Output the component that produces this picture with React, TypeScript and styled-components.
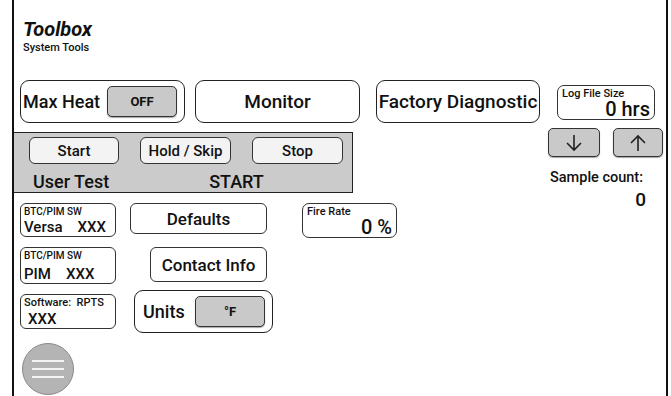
import React from 'react';
import styled, { createGlobalStyle } from 'styled-components';

const GlobalStyle = createGlobalStyle`
  html, body {
    margin: 0;
    padding: 0;
    background: #ffffff;
  }
  body {
    font-family: Roboto, 'Liberation Sans', sans-serif;
    color: #111111;
  }
`;

const App = () => {
  return (
    <>
      <GlobalStyle />
      <Frame>
        <Header>
          <Title>Toolbox</Title>
          <SubTitle>System Tools</SubTitle>
        </Header>

        <Body>
          <LeftColumn>
            <TopRow>
              <ToggleCard width={165}>
                <ToggleLabel>Max Heat</ToggleLabel>
                <GrayButton width={70} height={31}>
                  OFF
                </GrayButton>
              </ToggleCard>
              <BigButton width={165}>Monitor</BigButton>
              <BigButton width={164} gap={6}>
                Factory Diagnostic
              </BigButton>
            </TopRow>

            <TestPanel>
              <PanelButtons>
                <PanelButton width={90}>Start</PanelButton>
                <PanelButton width={91}>Hold / Skip</PanelButton>
                <PanelButton width={91}>Stop</PanelButton>
              </PanelButtons>
              <PanelStatus>
                <span>User Test</span>
                <span>START</span>
              </PanelStatus>
            </TestPanel>

            <InfoRow top={10}>
              <InfoBox height={34}>
                <InfoLabel>BTC/PIM SW</InfoLabel>
                <InfoValue>
                  Versa<Spacer />XXX
                </InfoValue>
              </InfoBox>
              <SoftButton width={137} offset={14}>
                Defaults
              </SoftButton>
              <ValueBox width={95} offset={35}>
                <InfoLabel size={11}>Fire Rate</InfoLabel>
                <BigValue>0 %</BigValue>
              </ValueBox>
            </InfoRow>

            <InfoRow top={9}>
              <InfoBox height={37}>
                <InfoLabel>BTC/PIM SW</InfoLabel>
                <InfoValue>
                  PIM<Spacer />XXX
                </InfoValue>
              </InfoBox>
              <SoftButton width={117} offset={34} height={35}>
                Contact Info
              </SoftButton>
            </InfoRow>

            <InfoRow top={6} center>
              <InfoBox height={35}>
                <InfoLabel size={11}>Software:&nbsp; RPTS</InfoLabel>
                <InfoValue indent>XXX</InfoValue>
              </InfoBox>
              <UnitsCard>
                <ToggleLabel>Units</ToggleLabel>
                <GrayButton width={70} height={31}>
                  °F
                </GrayButton>
              </UnitsCard>
            </InfoRow>

            <MenuButton aria-label="menu">
              <span />
              <span />
              <span />
            </MenuButton>
          </LeftColumn>

          <RightColumn>
            <ValueBox width={98} offset={9}>
              <InfoLabel size={11}>Log File Size</InfoLabel>
              <BigValue>0 hrs</BigValue>
            </ValueBox>
            <ArrowRow>
              <GrayButton width={52} height={29}>
                <svg width="18" height="20" viewBox="0 0 18 20">
                  <path d="M9 2v15M2 10l7 7 7-7" fill="none" stroke="#222" strokeWidth="1.6" />
                </svg>
              </GrayButton>
              <GrayButton width={50} height={29}>
                <svg width="18" height="20" viewBox="0 0 18 20">
                  <path d="M9 18V3M2 10l7-7 7 7" fill="none" stroke="#222" strokeWidth="1.6" />
                </svg>
              </GrayButton>
            </ArrowRow>
            <SampleLabel>Sample count:</SampleLabel>
            <SampleValue>0</SampleValue>
          </RightColumn>
        </Body>
      </Frame>
    </>
  );
};

export default App;

const Frame = styled.div`
  box-sizing: border-box;
  width: 656px;
  height: 396px;
  margin-left: 12px;
  border-left: 2px solid #111;
  border-right: 2px solid #111;
  overflow: hidden;
`;

const Header = styled.div`
  padding: 18px 0 0 9px;
  height: 60px;
  box-sizing: border-box;
`;

const Title = styled.div`
  font-size: 20px;
  font-weight: 700;
  font-style: italic;
  line-height: 23px;
`;

const SubTitle = styled.div`
  font-size: 11px;
  font-weight: 500;
  line-height: 13px;
`;

const Body = styled.div`
  display: flex;
  margin-top: 20px;
`;

const LeftColumn = styled.div`
  width: 534px;
  display: flex;
  flex-direction: column;
`;

const RightColumn = styled.div`
  display: flex;
  flex-direction: column;
  padding-top: 5px;
`;

const TopRow = styled.div`
  display: flex;
  gap: 10px;
  padding-left: 6px;
`;

const Card = styled.div<{ width?: number }>`
  box-sizing: border-box;
  height: 43px;
  width: ${(p) => p.width ?? 100}px;
  flex-shrink: 0;
  border: 1px solid #222;
  border-radius: 9px;
  background: #fff;
`;

const ToggleCard = styled(Card)`
  display: flex;
  align-items: center;
  justify-content: space-between;
  padding: 0 7px 0 2px;
`;

const UnitsCard = styled(ToggleCard)`
  width: 139px;
  margin-left: 18px;
  padding: 0 7px 0 8px;
`;

const ToggleLabel = styled.span`
  font-size: 18px;
  font-weight: 500;
`;

const GrayButton = styled.div<{ width: number; height: number }>`
  box-sizing: border-box;
  width: ${(p) => p.width}px;
  height: ${(p) => p.height}px;
  background: #c9c9c9;
  border: 1px solid #333;
  border-radius: 5px;
  box-shadow: 0 1px 1px rgba(0, 0, 0, 0.35);
  display: flex;
  align-items: center;
  justify-content: center;
  font-size: 13px;
  font-weight: 700;
`;

const BigButton = styled(Card)<{ gap?: number }>`
  margin-left: ${(p) => p.gap ?? 0}px;
  display: flex;
  align-items: center;
  justify-content: center;
  white-space: nowrap;
  font-size: 19px;
  font-weight: 500;
`;

const TestPanel = styled.div`
  box-sizing: border-box;
  margin-top: 9px;
  width: 339px;
  height: 61px;
  background: #cbcbcb;
  border: 1px solid #222;
  border-left: none;
  padding: 4px 0 0 15px;
`;

const PanelButtons = styled.div`
  display: flex;
  gap: 21px;
`;

const PanelButton = styled.div<{ width: number }>`
  box-sizing: border-box;
  width: ${(p) => p.width}px;
  height: 27px;
  background: #f3f3f3;
  border: 1px solid #333;
  border-radius: 6px;
  display: flex;
  align-items: center;
  justify-content: center;
  font-size: 15px;
  font-weight: 500;
`;

const PanelStatus = styled.div`
  display: flex;
  gap: 100px;
  padding: 7px 0 0 4px;
  font-size: 18px;
  font-weight: 500;
  line-height: 22px;
`;

const InfoRow = styled.div<{ top: number; center?: boolean }>`
  display: flex;
  align-items: ${(p) => (p.center ? 'center' : 'flex-start')};
  margin-top: ${(p) => p.top}px;
  padding-left: 6px;
`;

const InfoBox = styled.div<{ height: number }>`
  box-sizing: border-box;
  width: 96px;
  height: ${(p) => p.height}px;
  border: 1px solid #333;
  border-radius: 6px;
  padding: 2px 0 0 3px;
  display: flex;
  flex-direction: column;
  justify-content: space-between;
`;

const InfoLabel = styled.span<{ size?: number }>`
  font-size: ${(p) => p.size ?? 10}px;
  font-weight: 500;
  line-height: 12px;
  white-space: nowrap;
`;

const InfoValue = styled.span<{ indent?: boolean }>`
  font-size: 15px;
  font-weight: 500;
  line-height: 18px;
  padding-left: ${(p) => (p.indent ? 4 : 0)}px;
`;

const Spacer = styled.span`
  display: inline-block;
  width: 15px;
`;

const SoftButton = styled.div<{ width: number; offset: number; height?: number }>`
  box-sizing: border-box;
  width: ${(p) => p.width}px;
  height: ${(p) => p.height ?? 31}px;
  margin-left: ${(p) => p.offset}px;
  border: 1px solid #333;
  border-radius: 6px;
  display: flex;
  align-items: center;
  justify-content: center;
  font-size: 17px;
  font-weight: 500;
`;

const ValueBox = styled.div<{ width: number; offset: number }>`
  box-sizing: border-box;
  width: ${(p) => p.width}px;
  height: 35px;
  margin-left: ${(p) => p.offset}px;
  border: 1px solid #333;
  border-radius: 7px;
  padding: 2px 4px 0 4px;
  display: flex;
  flex-direction: column;
`;

const BigValue = styled.span`
  align-self: flex-end;
  font-size: 20px;
  font-weight: 500;
  line-height: 18px;
`;

const MenuButton = styled.div`
  box-sizing: border-box;
  width: 52px;
  height: 52px;
  margin: 10px 0 0 8px;
  border-radius: 50%;
  background: #b4b4b4;
  border: 1px solid #888;
  display: flex;
  flex-direction: column;
  align-items: center;
  justify-content: center;
  gap: 6px;

  span {
    display: block;
    width: 32px;
    height: 2px;
    background: #f4f4f4;
  }
`;

const ArrowRow = styled.div`
  display: flex;
  gap: 13px;
  margin-top: 8px;
`;

const SampleLabel = styled.div`
  margin-top: 12px;
  padding-left: 2px;
  font-size: 14.5px;
  font-weight: 500;
  line-height: 17px;
`;

const SampleValue = styled.div`
  width: 98px;
  text-align: right;
  margin-top: 4px;
  font-size: 19px;
  font-weight: 500;
  line-height: 20px;
`;
